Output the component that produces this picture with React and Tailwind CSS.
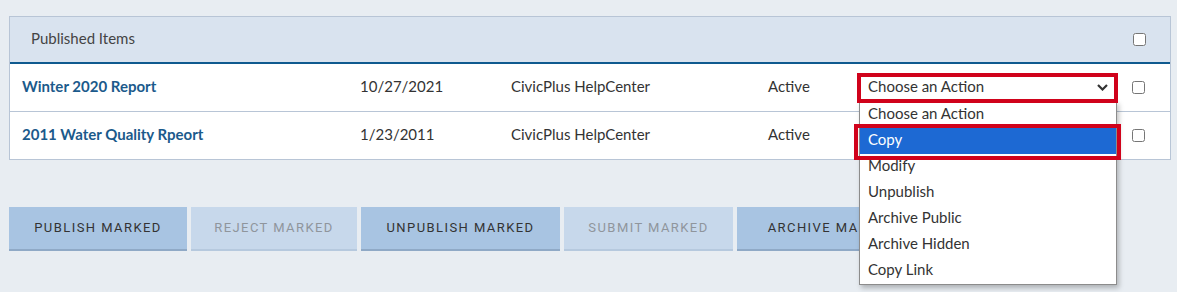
import React from "react";

const rows = [
  { title: "Winter 2020 Report", date: "10/27/2021", by: "CivicPlus HelpCenter", status: "Active", open: true },
  { title: "2011 Water Quality Rpeort", date: "1/23/2011", by: "CivicPlus HelpCenter", status: "Active", open: false },
];

const options = ["Choose an Action", "Copy", "Modify", "Unpublish", "Archive Public", "Archive Hidden", "Copy Link"];

const buttons = [
  { label: "Publish Marked", w: "w-[178px]", on: true },
  { label: "Reject Marked", w: "w-[166px]", on: false },
  { label: "Unpublish Marked", w: "w-[199px]", on: true },
  { label: "Submit Marked", w: "w-[169px]", on: false },
  { label: "Archive Marked", w: "w-[190px]", on: true },
];

function Check() {
  return <input type="checkbox" className="m-0 h-[13px] w-[13px]" />;
}

function ActionSelect() {
  return (
    <div className="relative h-[26px] w-[258px]">
      <div className="flex h-full items-center justify-between border border-[#9fb6cf] bg-white pb-[2px] pl-[8px] pr-[8px] text-[15px] text-[#333]">
        <span>Choose an Action</span>
        <svg width="11" height="7" viewBox="0 0 11 7" className="mt-[2px]">
          <path d="M1 1l4.5 4.5L10 1" fill="none" stroke="#333" strokeWidth="2.2" />
        </svg>
      </div>
      {/* annotation around the select */}
      <div className="pointer-events-none absolute -left-[2px] -top-[2px] z-20 h-[30px] w-[261px] border-4 border-[#d0021b]" />
      <div className="absolute left-0 top-[26px] z-10 w-[258px] border border-[#8c8c8c] bg-white shadow-[2px_3px_5px_rgba(0,0,0,0.25)]">
        {options.map((o) => (
          <div
            key={o}
            className={
              "flex h-[26px] items-center pb-[3px] pl-[8px] text-[15px] " +
              (o === "Copy" ? "bg-[#1d69d3] text-white" : "text-[#333]")
            }
          >
            {o}
          </div>
        ))}
        <div className="pointer-events-none absolute -left-[6px] top-[22px] h-[36px] w-[267px] border-4 border-[#d0021b]" />
      </div>
    </div>
  );
}

export default function App() {
  return (
    <div className="h-[292px] w-[1177px] overflow-hidden bg-[#e8edf2] px-[9px] pt-[16px] font-['Lato',sans-serif]">
      <div className="w-[1162px] border border-[#b8c5d6] bg-white">
        <div className="flex h-[47px] items-center border-b-2 border-[#0f5a8f] bg-[#d9e3ef] pl-[21px] text-[15px] text-[#444]">
          <span className="flex-1 pb-[2px]">Published Items</span>
          <div className="mr-[24px] flex">
            <Check />
          </div>
        </div>
        {rows.map((r, i) => (
          <div
            key={r.title}
            className={
              "flex h-[47px] items-center pl-[12px] text-[15px] text-[#333] " +
              (i === 0 ? "h-[48px] border-b border-[#b8c5d6]" : "")
            }
          >
            <div className="w-[338px] pb-[2px] font-bold text-[#1b5a8b]">{r.title}</div>
            <div className="w-[151px] pb-[2px]">{r.date}</div>
            <div className="w-[257px] pb-[2px]">{r.by}</div>
            <div className="w-[91px] pb-[2px]">{r.status}</div>
            <div className="w-[258px]">{r.open ? <ActionSelect /> : null}</div>
            <div className="ml-[15px] flex">
              <Check />
            </div>
          </div>
        ))}
      </div>

      <div className="mt-[47px] flex gap-[4px]">
        {buttons.map((b) => (
          <div
            key={b.label}
            className={
              "flex h-[44px] shrink-0 items-center justify-center border-b-2 font-['Roboto',sans-serif] text-[13px] uppercase tracking-[0.11em] " +
              b.w +
              (b.on
                ? " border-[#8fa9c6] bg-[#a8c4e2] text-[#333]"
                : " border-[#b6c9de] bg-[#c7d8eb] text-[#8f959c]")
            }
          >
            {b.label}
          </div>
        ))}
      </div>
    </div>
  );
}
